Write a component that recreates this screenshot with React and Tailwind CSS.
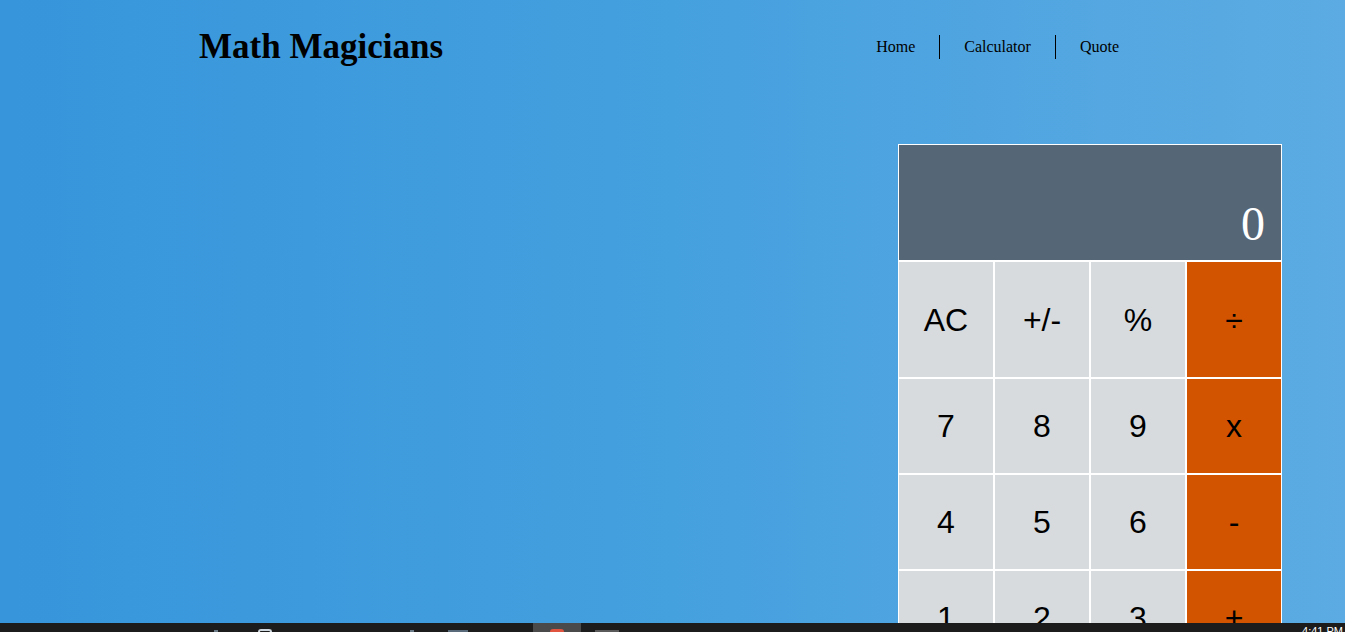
import React from "react";

const keys = [
  ["AC", "+/-", "%", "÷"],
  ["7", "8", "9", "x"],
  ["4", "5", "6", "-"],
  ["1", "2", "3", "+"],
  ["0", ".", "="],
];

function Key({ label, op, wide, tall }) {
  return (
    <button
      className={`${op ? "bg-[#d35400]" : "bg-[#d7dbde]"} ${
        wide ? "col-span-2" : ""
      } ${
        tall ? "h-[117px]" : "h-[96px]"
      } border border-white flex items-center justify-center text-[32px] text-black font-['Liberation_Sans',Arial,sans-serif]`}
    >
      {label}
    </button>
  );
}

export default function App() {
  return (
    <div className="min-h-screen bg-gradient-to-r from-[#3695db] via-[#45a0de] to-[#5cabe3] font-['Liberation_Serif','Times_New_Roman',serif] text-black">
      <header className="h-[94px] flex items-center justify-between pl-[199px] pr-[202px]">
        <h1 className="text-[35px] font-bold">Math Magicians</h1>
        <nav>
          <ul className="flex text-base">
            <li className="px-6 border-r border-black">Home</li>
            <li className="px-6 border-r border-black">Calculator</li>
            <li className="px-6">Quote</li>
          </ul>
        </nav>
      </header>

      <main className="flex justify-end pr-[63px] mt-[50px]">
        <div className="w-[384px] grid grid-cols-4">
          <div className="col-span-4 h-[117px] border border-white bg-[#556677] flex items-end justify-end px-4 pb-3">
            <span className="text-[48px] leading-none text-white">0</span>
          </div>
          {keys.map((row, r) =>
            row.map((k, i) => (
              <Key
                key={`${r}-${k}`}
                label={k}
                op={i === row.length - 1}
                wide={r === 4 && i === 0}
                tall={r === 0}
              />
            ))
          )}
        </div>
      </main>

      {/* windows taskbar peeking in at the bottom */}
      <div className="fixed bottom-0 left-0 right-0 h-[9px] overflow-hidden bg-[#1c1c1c] flex items-start">
        <div className="ml-[214px] mt-[7px] w-[4px] h-[2px] bg-[#6b7b88]"></div>
        <div className="ml-[40px] mt-[6px] w-[14px] h-[3px] rounded-t-full border-t-2 border-x-2 border-[#cfd8df]"></div>
        <div className="ml-[138px] mt-[7px] w-[4px] h-[2px] bg-[#6b7b88]"></div>
        <div className="ml-[34px] mt-[7px] w-[20px] h-[2px] bg-[#596a7a]"></div>
        <div className="ml-[65px] w-[48px] h-[9px] bg-[#4a4a4a] flex justify-center">
          <div className="mt-[6px] w-[14px] h-[3px] rounded-t-full bg-[#e0533f]"></div>
        </div>
        <div className="ml-[14px] mt-[7px] w-[24px] h-[2px] bg-[#5a5a5a]"></div>
        <span className="ml-auto mr-[2px] mt-[3px] leading-none text-[11px] text-white font-['Liberation_Sans',sans-serif]">4:41 PM</span>
      </div>
    </div>
  );
}
